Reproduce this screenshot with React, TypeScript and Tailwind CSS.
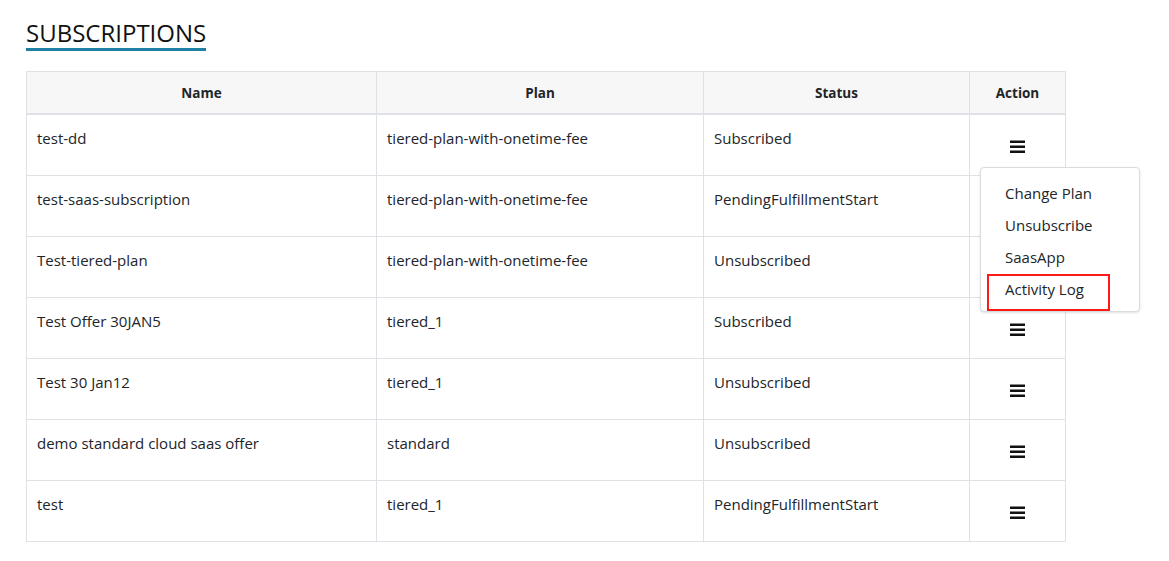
import React from "react";

const rows = [
  { name: "test-dd", plan: "tiered-plan-with-onetime-fee", status: "Subscribed" },
  { name: "test-saas-subscription", plan: "tiered-plan-with-onetime-fee", status: "PendingFulfillmentStart" },
  { name: "Test-tiered-plan", plan: "tiered-plan-with-onetime-fee", status: "Unsubscribed" },
  { name: "Test Offer 30JAN5", plan: "tiered_1", status: "Subscribed" },
  { name: "Test 30 Jan12", plan: "tiered_1", status: "Unsubscribed" },
  { name: "demo standard cloud saas offer", plan: "standard", status: "Unsubscribed" },
  { name: "test", plan: "tiered_1", status: "PendingFulfillmentStart" },
];

const menu = ["Change Plan", "Unsubscribe", "SaasApp", "Activity Log"];

function MenuIcon() {
  return (
    <svg width="15" height="13" viewBox="0 0 15 13" fill="#111">
      <rect x="0" y="0.5" width="15" height="2.5" />
      <rect x="0" y="5.5" width="15" height="2.5" />
      <rect x="0" y="10.5" width="15" height="2.5" />
    </svg>
  );
}

export default function App() {
  return (
    <div className="relative min-h-[561px] bg-white pl-[26px] pt-[18px] font-['Open_Sans',sans-serif] text-[#212529]">
      {/* Title */}
      <h2 className="inline-block border-b-[3px] border-[#1f80a6] text-[24px] leading-[30px] text-[#111]">
        SUBSCRIPTIONS
      </h2>

      {/* Table */}
      <div className="mt-[20px] grid w-[1040px] grid-cols-[350px_327px_266px_96px] border-l border-t border-[#dee2e6]">
        {["Name", "Plan", "Status", "Action"].map((h) => (
          <div
            key={h}
            className="flex h-[43px] items-center justify-center border-b-2 border-r border-[#dee2e6] bg-[#f7f7f7] pt-[2px] text-[13.5px] font-bold"
          >
            {h}
          </div>
        ))}
        {rows.map((r, i) => (
          <React.Fragment key={i}>
            <div className="h-[61px] border-b border-r border-[#dee2e6] px-[10px] pt-[11px] text-[15px] leading-6">{r.name}</div>
            <div className="h-[61px] border-b border-r border-[#dee2e6] px-[10px] pt-[11px] text-[15px] leading-6">{r.plan}</div>
            <div className="h-[61px] border-b border-r border-[#dee2e6] px-[10px] pt-[11px] text-[15px] leading-6">{r.status}</div>
            <div className="flex h-[61px] items-center justify-center border-b border-r border-[#dee2e6] pt-[3px]">
              <MenuIcon />
            </div>
          </React.Fragment>
        ))}
      </div>

      {/* Open dropdown */}
      <div className="absolute left-[980px] top-[167px] w-[160px] rounded border border-[#dcdcdc] bg-white pb-[6px] pt-[9px] shadow-sm">
        {menu.map((m) => (
          <div key={m} className="relative flex h-[32px] items-center pl-[24px] text-[15px]">
            {m}
            {m === "Activity Log" && (
              <div className="absolute left-[6px] top-[1px] h-[37px] w-[123px] border-2 border-[#ff1a1a]" />
            )}
          </div>
        ))}
      </div>
    </div>
  );
}
